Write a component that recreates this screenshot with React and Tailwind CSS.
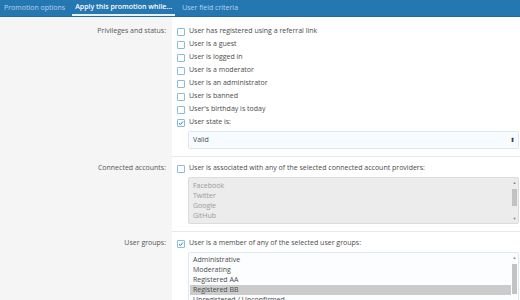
const privileges = [
  { label: 'User has registered using a referral link', checked: false },
  { label: 'User is a guest', checked: false },
  { label: 'User is logged in', checked: false },
  { label: 'User is a moderator', checked: false },
  { label: 'User is an administrator', checked: false },
  { label: 'User is banned', checked: false },
  { label: "User's birthday is today", checked: false },
  { label: 'User state is:', checked: true },
]

const providers = ['Facebook', 'Twitter', 'Google', 'GitHub', 'Linkedin']
const groups = ['Administrative', 'Moderating', 'Registered AA', 'Registered BB', 'Unregistered / Unconfirmed']

function Check({ checked }) {
  return (
    <span className="w-[8px] h-[8px] border border-[#86bde0] bg-white rounded-[1px] flex items-center justify-center shrink-0">
      {checked && (
        <svg width="6" height="6" viewBox="0 0 6 6" fill="none">
          <path d="M1 3.2 L2.4 4.5 L5 1.5" stroke="#2577b1" strokeWidth="1" />
        </svg>
      )}
    </span>
  )
}

function Option({ label, checked }) {
  return (
    <div className="h-[13px] flex items-center gap-[4px]">
      <Check checked={checked} />
      <span className="text-[#4b4b4b]">{label}</span>
    </div>
  )
}

function Row({ label, children, pt, last }) {
  return (
    <div className="flex">
      <div className={`w-[172px] shrink-0 bg-[#f5f5f5] pr-[6px] text-[#555] ${pt}`}>
        <div className="h-[13px] flex items-center justify-end">{label}</div>
      </div>
      <div className={`flex-1 pl-[5px] pr-[1px] bg-white ${pt} ${last ? '' : 'pb-[7px] border-b border-[#e8e8e8]'}`}>
        {children}
      </div>
    </div>
  )
}

function ScrollBar({ top, height }) {
  return (
    <div className="w-[7px] shrink-0 flex flex-col items-center py-[2px] text-[#888]">
      <span className="text-[4px] leading-[5px]">▲</span>
      <div className="flex-1 w-full relative">
        <div className="absolute left-[1px] right-[1px] bg-[#c2c2c2]" style={{ top, height }} />
      </div>
      <span className="text-[4px] leading-[5px]">▼</span>
    </div>
  )
}

export default function App() {
  const tabs = ['Promotion options', 'Apply this promotion while...', 'User field criteria']

  return (
    <div className="h-[300px] w-[520px] overflow-hidden bg-[#f5f5f5] text-[7px] font-['Open_Sans',sans-serif]">
      <div className="h-[17px] bg-[#2577b1] flex items-stretch pl-[3px] gap-[6px] border-b border-[#1f6aa0]">
        {tabs.map((t, i) => (
          <div
            key={t}
            className={`flex items-center ${i === 1 ? 'text-white font-semibold border-b-2 border-[#e6f1f9] px-[3px]' : 'text-[#b7d5ec] px-[1px]'}`}
          >
            {t}
          </div>
        ))}
      </div>

      <Row label="Privileges and status:" pt="pt-[8px]">
        {privileges.map(p => <Option key={p.label} {...p} />)}
        <div className="ml-[11px] mt-[2px] h-[18px] border border-[#dfe8ee] bg-[#f6fbff] rounded-[2px] flex items-center justify-between pl-[4px] pr-[3px] text-[#4b4b4b]">
          <span>Valid</span>
          <span className="text-[6px] leading-none text-[#333]">⬍</span>
        </div>
      </Row>

      <Row label="Connected accounts:" pt="pt-[5px]">
        <Option label="User is associated with any of the selected connected account providers:" />
        <div className="ml-[11px] mt-[2px] h-[47px] border border-[#dcdcdc] bg-[#ececec] rounded-[2px] flex overflow-hidden">
          <div className="flex-1 pl-[4px] pt-[3px] text-[#9a9a9a] leading-[10px]">
            {providers.map(p => <div key={p}>{p}</div>)}
          </div>
          <ScrollBar top={4} height={17} />
        </div>
      </Row>

      <Row label="User groups:" pt="pt-[5px]" last>
        <Option label="User is a member of any of the selected user groups:" checked />
        <div className="ml-[11px] mt-[2px] h-[60px] border border-[#dfe8ee] bg-[#fbfdff] rounded-[2px] flex overflow-hidden">
          <div className="flex-1 pl-[1px] pt-[2px] text-[#4b4b4b] leading-[10px]">
            {groups.map(g => (
              <div key={g} className={`pl-[3px] ${g === 'Registered BB' ? 'bg-[#cbcbcb]' : ''}`}>{g}</div>
            ))}
          </div>
          <ScrollBar top={4} height={30} />
        </div>
      </Row>
    </div>
  )
}
